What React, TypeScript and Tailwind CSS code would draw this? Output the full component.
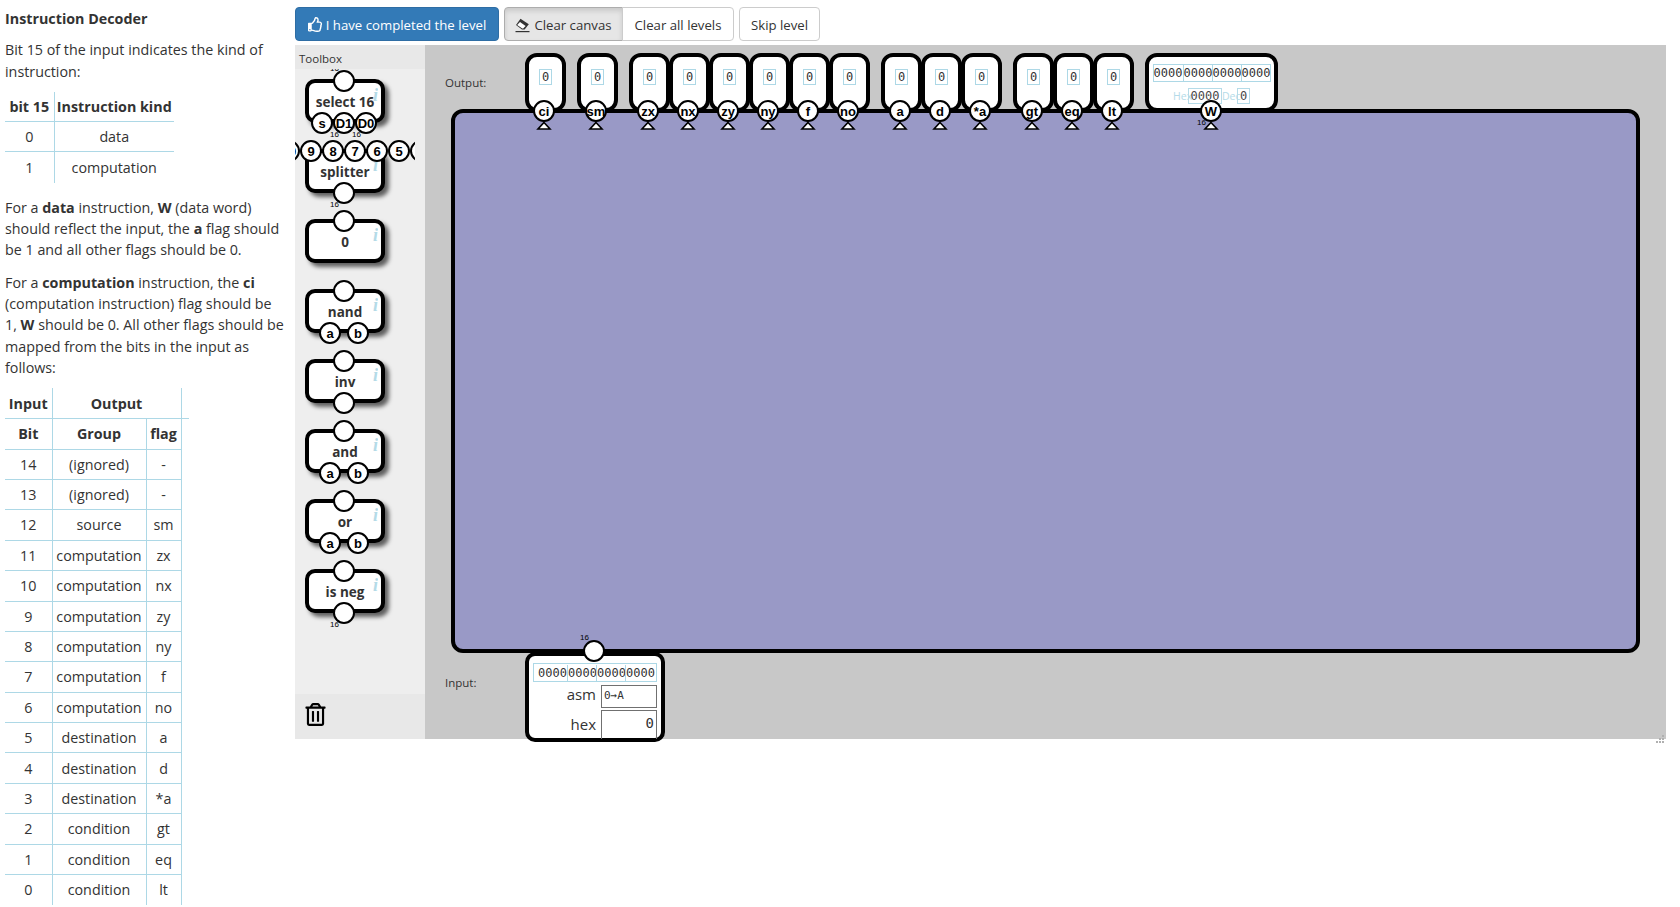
import React from "react";
import { FaRegThumbsUp, FaRegTrashAlt } from "react-icons/fa";

const outs = [
  ["ci", 544], ["sm", 596], ["zx", 648], ["nx", 688], ["zy", 728], ["ny", 768], ["f", 808], ["no", 848],
  ["a", 900], ["d", 940], ["*a", 980], ["gt", 1032], ["eq", 1072], ["lt", 1112],
] as const;

const rows = [
  [14, "(ignored)", "-"], [13, "(ignored)", "-"], [12, "source", "sm"], [11, "computation", "zx"],
  [10, "computation", "nx"], [9, "computation", "zy"], [8, "computation", "ny"], [7, "computation", "f"],
  [6, "computation", "no"], [5, "destination", "a"], [4, "destination", "d"], [3, "destination", "*a"],
  [2, "condition", "gt"], [1, "condition", "eq"], [0, "condition", "lt"],
] as const;

const Pin = ({ t }: { t?: string }) => (
  <div className="w-[22px] h-[22px] shrink-0 rounded-full border-[2.5px] border-black bg-white flex items-center justify-center text-[13px] font-bold leading-none text-black font-['Liberation_Sans',sans-serif]">
    {t}
  </div>
);

const Tiny = ({ className }: { className: string }) => (
  <span className={"absolute text-[8px] leading-none text-black font-['Liberation_Sans',sans-serif] " + className}>16</span>
);

const Node = ({ label, top, bottom, gap = "gap-0", children }: { label: string; top?: string[]; bottom?: string[]; gap?: string; children?: React.ReactNode }) => (
  <div className="relative ml-[10px] w-[80px] h-[44px] shrink-0 rounded-[10px] border-4 border-black bg-white shadow-[4px_4px_4px_rgba(0,0,0,0.6)] flex items-center justify-center pt-[4px]">
    <span className="font-bold text-[13.5px] leading-none text-[#333]">{label}</span>
    <span className="absolute right-[3px] top-[3px] text-[18px] leading-none italic font-bold text-[#add8e6] opacity-90 font-['Liberation_Serif',serif]">i</span>
    <div className="absolute -left-[5px] -right-[3px] -top-[13px] flex justify-center">
      {(top ?? [""]).map((t) => <Pin key={t} t={t} />)}
    </div>
    {bottom && (
      <div className={"absolute -left-[5px] -right-[3px] -bottom-[15px] flex justify-center " + gap}>
        {bottom.map((t) => <Pin key={t} t={t} />)}
      </div>
    )}
    {children}
  </div>
);

const Bits = ({ className }: { className: string }) => (
  <div className={"flex items-center border border-[#add8e6] font-['DejaVu_Sans_Mono',monospace] text-[12px] leading-none text-[#333] " + className}>
    {[0, 1, 2, 3].map((i) => (
      <span key={i} className={"w-[29px] text-center leading-[16px] " + (i ? "border-l border-[#add8e6]" : "")}>0000</span>
    ))}
  </div>
);

const Triangle = ({ x }: { x: number }) => (
  <svg className="absolute top-[76px]" style={{ left: x - 433 }} width="16" height="9" viewBox="0 0 16 9">
    <polygon points="8,1.5 14,8 2,8" fill="#fff" stroke="#000" strokeWidth="1.6" />
  </svg>
);

const Eraser = () => (
  <svg width="15" height="15" viewBox="0 0 15 15" className="shrink-0">
    <path d="M5.5 0.8 L13.8 6.2 L9.6 11.4 L7 11.4 L1 7 Z" fill="#333" />
    <path d="M2.2 7 L5 4 L10.6 8 L8.2 10.6 L7.3 10.6 Z" fill="#fff" />
    <rect x="0.5" y="13" width="14" height="1.2" fill="#333" />
  </svg>
);

const btn = "h-[34px] border text-[#333] bg-white border-[#ccc] flex items-center justify-center pt-[3px]";
const line = "border-[#add8e6]";

export default function App() {
  return (
    <div className="flex min-h-[907px] bg-white text-[#333] font-['Open_Sans',sans-serif] text-[14.3px] leading-[21.3px]">
      <div className="w-[295px] shrink-0 pl-[5px] pr-[5px] pt-[8px]">
        <div className="font-bold mb-[10px]">Instruction Decoder</div>
        <p className="mb-[10px]">Bit 15 of the input indicates the kind of instruction:</p>
        <table className="border-collapse table-fixed text-center mb-[14px] w-[169px]">
          <colgroup><col className="w-[49px]" /><col className="w-[120px]" /></colgroup>
          <thead>
            <tr className="h-[30px]">
              <th className="p-0">bit 15</th>
              <th className={"p-0 border-l " + line}>Instruction kind</th>
            </tr>
          </thead>
          <tbody>
            <tr className={"h-[30px] border-t " + line}><td className="p-0">0</td><td className={"p-0 border-l " + line}>data</td></tr>
            <tr className={"h-[31px] border-t " + line}><td className="p-0">1</td><td className={"p-0 border-l " + line}>computation</td></tr>
          </tbody>
        </table>
        <p className="mb-[11px]">For a <b>data</b> instruction, <b>W</b> (data word) should reflect the input, the <b>a</b> flag should be 1 and all other flags should be 0.</p>
        <p className="mb-[10px]">For a <b>computation</b> instruction, the <b>ci</b> (computation instruction) flag should be<br />1, <b>W</b> should be 0. All other flags should be mapped from the bits in the input as follows:</p>
        <table className="border-collapse table-fixed text-center w-[184px]">
          <colgroup><col className="w-[47px]" /><col className="w-[94px]" /><col className="w-[35px]" /><col className="w-[8px]" /></colgroup>
          <thead>
            <tr className="h-[30.4px]">
              <th className="p-0">Input</th>
              <th colSpan={2} className={"p-0 border-l border-r " + line}>Output</th>
              <th className="p-0"></th>
            </tr>
            <tr className="h-[30.4px]">
              <th className={"p-0 border-t " + line}>Bit</th>
              <th className={"p-0 border-t border-l " + line}>Group</th>
              <th className={"p-0 border-t border-l border-r " + line}>flag</th>
              <th className={"p-0 border-t " + line}></th>
            </tr>
          </thead>
          <tbody>
            {rows.map(([b, g, f]) => (
              <tr key={b} className="h-[30.4px]">
                <td className={"p-0 border-t " + line}>{b}</td>
                <td className={"p-0 border-t border-l " + line}>{g}</td>
                <td className={"p-0 border-t border-l border-r " + line}>{f}</td>
                <td className="p-0"></td>
              </tr>
            ))}
          </tbody>
        </table>
      </div>

      <div className="w-[1371px] shrink-0">
        <div className="flex gap-[5px] pt-[7px] h-[45px] text-[13.2px]">
          <button className="h-[34px] w-[204px] rounded-[4px] bg-[#337ab7] border border-[#2e6da4] text-white flex items-center justify-center gap-[3px] pt-[3px]">
            <FaRegThumbsUp size={15} className="-mt-[3px]" /> I have completed the level
          </button>
          <div className="flex">
            <button className={btn + " w-[119px] rounded-l-[4px] gap-[4px] !bg-[#e6e6e6] !border-[#adadad] shadow-[inset_0_3px_5px_rgba(0,0,0,0.125)]"}>
              <Eraser /> Clear canvas
            </button>
            <button className={btn + " w-[112px] rounded-r-[4px] -ml-px"}>Clear all levels</button>
          </div>
          <button className={btn + " w-[81px] rounded-[4px]"}>Skip level</button>
        </div>

        <div className="relative flex h-[694px]">
          <div className="w-[130px] shrink-0 flex flex-col overflow-hidden bg-[#eeeeee]">
            <div className="relative z-10 h-[24px] shrink-0 bg-[#e8e8e8] pl-[4px] pt-[2px] text-[11.5px] leading-[24px]">Toolbox</div>
            <div className="w-[120px] flex-1 overflow-hidden flex flex-col gap-[26px] pt-[10px]">
              <Node label="select 16" bottom={["s", "D1", "D0"]}>
                <Tiny className="left-[21px] -top-[18px]" />
                <Tiny className="left-[21px] top-[48px]" />
                <Tiny className="left-[43px] top-[48px]" />
              </Node>
              <Node label="splitter" top={["15", "14", "13", "12", "11", "10", "9", "8", "7", "6", "5", "4", "3", "2", "1", "0"]} bottom={[""]}>
                <Tiny className="left-[21px] top-[48px]" />
              </Node>
              <Node label="0" />
              <Node label="nand" bottom={["a", "b"]} gap="gap-[6px]" />
              <Node label="inv" bottom={[""]} />
              <Node label="and" bottom={["a", "b"]} gap="gap-[6px]" />
              <Node label="or" bottom={["a", "b"]} gap="gap-[6px]" />
              <Node label="is neg" bottom={[""]}>
                <Tiny className="left-[21px] top-[48px]" />
              </Node>
            </div>
            <div className="h-[45px] shrink-0 bg-[#e8e8e8] pl-[9px] pt-[9px] relative z-10">
              <FaRegTrashAlt size={23} className="text-black" />
            </div>
          </div>

          <div className="relative flex-1 bg-[#c8c8c8]">
            <span className="absolute left-[20px] top-[28px] text-[11.5px] leading-[20px]">Output:</span>
            <span className="absolute left-[20px] top-[628px] text-[11.5px] leading-[20px]">Input:</span>

            <div className="absolute left-[26px] top-[64px] w-[1189px] h-[544px] rounded-[12px] border-4 border-black bg-[#9999c6]" />

            {outs.map(([t, x]) => (
              <div key={t} className="absolute top-[8px] w-[41px] h-[59px] rounded-[12px] border-4 border-black bg-white flex justify-center pt-[12px]" style={{ left: x - 444 }}>
                <span className="w-[13px] h-[16px] border border-[#add8e6] text-center font-['DejaVu_Sans_Mono',monospace] text-[12px] leading-[14px]">0</span>
              </div>
            ))}
            <div className="absolute left-[720px] top-[8px] w-[133px] h-[59px] rounded-[12px] border-4 border-black bg-white flex flex-col items-center pt-[7px]">
              <Bits className="w-[118px] h-[18px]" />
              <div className="flex items-center mt-[6px] text-[10.5px] leading-none text-[#add8e6] opacity-90">
                <span className="w-[15px] whitespace-nowrap">Hex</span>
                <span className="w-[34px] h-[16px] border border-[#add8e6] text-center font-['DejaVu_Sans_Mono',monospace] text-[12px] leading-[14px] text-[#333]">0000</span>
                <span className="w-[15px] whitespace-nowrap">Dec</span>
                <span className="w-[13px] h-[16px] border border-[#add8e6] text-center font-['DejaVu_Sans_Mono',monospace] text-[12px] leading-[14px] text-[#333]">0</span>
              </div>
            </div>

            {outs.map(([t, x]) => (
              <React.Fragment key={t}>
                <Triangle x={x} />
                <div className="absolute top-[55px]" style={{ left: x - 436 }}><Pin t={t} /></div>
              </React.Fragment>
            ))}
            <Triangle x={1211} />
            <div className="absolute top-[55px] left-[775px]"><Pin t="W" /></div>
            <Tiny className="left-[772px] top-[74px]" />

            <div className="absolute left-[100px] top-[607px] w-[140px] h-[90px] rounded-[10px] border-4 border-black bg-white px-[4px] pt-[7px]">
              <Bits className="w-[124px] h-[19px] pl-[4px]" />
              <div className="flex justify-end items-center gap-[5px] mt-[3px] h-[23px]">
                <span className="text-[15px] -mt-[3px]">asm</span>
                <span className="w-[56px] h-[23px] border-[1.5px] border-[#707070] pl-[2px] font-['DejaVu_Sans_Mono',monospace] text-[11px] leading-[20px]">0→A</span>
              </div>
              <div className="flex justify-end items-center gap-[5px] mt-[2px] h-[29px]">
                <span className="text-[15px]">hex</span>
                <span className="w-[56px] h-[29px] border-[1.5px] border-b-0 border-[#707070] pr-[2px] text-right font-['DejaVu_Sans_Mono',monospace] text-[14px] leading-[25px]">0</span>
              </div>
              <div className="absolute left-[54px] -top-[16px]"><Pin /></div>
              <Tiny className="left-[51px] -top-[22px]" />
            </div>

            <svg className="absolute right-[1px] -bottom-[5px]" width="9" height="9" viewBox="0 0 9 9" fill="#b0b0b0">
              <rect x="6" y="0" width="2" height="2" /><rect x="3" y="3" width="2" height="2" /><rect x="6" y="3" width="2" height="2" />
              <rect x="0" y="6" width="2" height="2" /><rect x="3" y="6" width="2" height="2" /><rect x="6" y="6" width="2" height="2" />
            </svg>
          </div>
        </div>
      </div>
    </div>
  );
}
